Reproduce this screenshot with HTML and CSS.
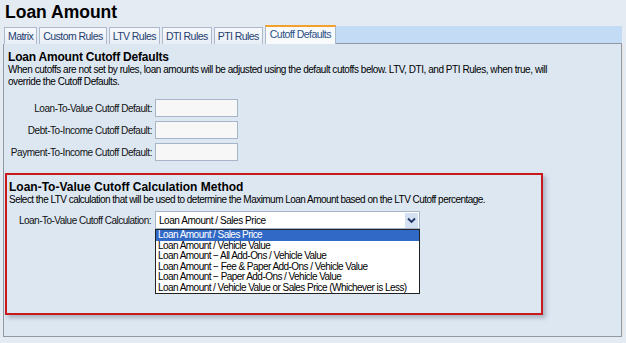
FILE: index.html
```html
<!DOCTYPE html>
<html lang="en">
<head>
  <meta charset="UTF-8">
  <title>Loan Amount</title>
  <link rel="stylesheet" href="styles.css">
</head>
<body>
  <h1 class="title">Loan Amount</h1>

  <div class="tabs">
    <div class="tab">Matrix</div>
    <div class="tab">Custom Rules</div>
    <div class="tab">LTV Rules</div>
    <div class="tab">DTI Rules</div>
    <div class="tab">PTI Rules</div>
    <div class="tab active">Cutoff Defaults</div>
    <div class="tab-fill"></div>
  </div>

  <div class="panel">
    <div class="section">
      <h2>Loan Amount Cutoff Defaults</h2>
      <p class="desc">When cutoffs are not set by rules, loan amounts will be adjusted using the default cutoffs below. LTV, DTI, and PTI Rules, when true, will override the Cutoff Defaults.</p>

      <div class="form">
        <label>Loan-To-Value Cutoff Default:</label>
        <div class="input"></div>
        <label>Debt-To-Income Cutoff Default:</label>
        <div class="input"></div>
        <label>Payment-To-Income Cutoff Default:</label>
        <div class="input"></div>
      </div>
    </div>

    <!-- highlighted calculation method block -->
    <div class="section method">
      <h2>Loan-To-Value Cutoff Calculation Method</h2>
      <p class="desc">Select the LTV calculation that will be used to determine the Maximum Loan Amount based on the LTV Cutoff percentage.</p>

      <div class="select-row">
        <label>Loan-To-Value Cutoff Calculation:</label>
        <div class="select">
          <span>Loan Amount / Sales Price</span>
          <span class="select-btn">
            <svg width="9" height="7" viewBox="0 0 9 7"><polyline points="1,1.5 4.5,5 8,1.5" fill="none" stroke="#1d3566" stroke-width="1.8"/></svg>
          </span>
          <ul class="options">
            <li class="selected">Loan Amount / Sales Price</li>
            <li>Loan Amount / Vehicle Value</li>
            <li>Loan Amount &minus; All Add-Ons / Vehicle Value</li>
            <li>Loan Amount &minus; Fee &amp; Paper Add-Ons / Vehicle Value</li>
            <li>Loan Amount &minus; Paper Add-Ons / Vehicle Value</li>
            <li>Loan Amount / Vehicle Value or Sales Price (Whichever is Less)</li>
          </ul>
        </div>
      </div>
    </div>
  </div>
</body>
</html>
```

FILE: styles.css
```css
body {
  margin: 0;
  background: #e5ebf2;
  font-family: 'Liberation Sans', Arial, sans-serif;
  color: #000;
}
.title {
  margin: 0;
  padding: 1px 0 0 5px;
  font-size: 17.5px;
  line-height: 22px;
  font-weight: bold;
}
.tabs {
  display: flex;
  align-items: flex-end;
  margin: 2px 4px 0 4px;
  height: 19px;
}
.tab {
  height: 17px;
  box-sizing: border-box;
  padding: 0 3px;
  margin-right: 2px;
  border: 1px solid #aab9cb;
  border-bottom: none;
  background: linear-gradient(#f7f9fc, #e8eef5);
  color: #25406f;
  font-size: 10.5px;
  letter-spacing: -0.55px;
  line-height: 17px;
}
.tab.active {
  height: 19px;
  margin-right: 0;
  background: #f8fafc;
  border-top: 2px solid #f3a02c;
  border-color: #f3a02c #aab9cb #aab9cb;
  color: #2b4f86;
  line-height: 15px;
  padding: 0 4px;
}
.tab-fill {
  flex: 1;
  height: 18px;
  box-sizing: border-box;
  background: #c4dbf5;
  border-bottom: 1px solid #8f9aa6;
}
.panel {
  margin: 0 4px 0 3px;
  height: 293px;
  box-sizing: border-box;
  border: 1px solid #8f9aa6;
  border-top: none;
  background: #dce7f2;
  padding: 6px 0 0 1px;
  box-shadow: 1px 1px 0 #e9e4d2;
}
.section {
  padding-left: 3px;
}
h2 {
  margin: 0;
  font-size: 12px;
  line-height: 14px;
  letter-spacing: -0.2px;
}
.desc {
  margin: 0;
  font-size: 10px;
  line-height: 12px;
  letter-spacing: -0.45px;
  width: 545px;
}
.form {
  display: grid;
  grid-template-columns: 144px 83px;
  column-gap: 3px;
  row-gap: 4px;
  margin-top: 11px;
  align-items: center;
}
label {
  font-size: 10px;
  letter-spacing: -0.45px;
  text-align: right;
  color: #111;
}
.input {
  height: 18px;
  box-sizing: border-box;
  border: 1px solid #a6b5c8;
  background: #f7f7f7;
}
.method {
  margin-top: 12px;
  width: 538px;
  height: 142px;
  box-sizing: border-box;
  border: 2px solid #c8191c;
  padding: 5px 0 0 2px;
  box-shadow: 3px 3px 4px rgba(80, 90, 110, 0.35);
}
.method h2 {
  letter-spacing: 0;
}
.method .desc {
  letter-spacing: -0.53px;
}
.select-row {
  display: flex;
  align-items: center;
  margin-top: 5px;
}
.select-row label {
  width: 142px;
  letter-spacing: -0.5px;
}
.select {
  position: relative;
  margin-left: 4px;
  width: 265px;
  height: 18px;
  box-sizing: border-box;
  border: 1px solid #a6b5c8;
  background: #fff;
  display: flex;
  align-items: center;
  justify-content: space-between;
  font-size: 10px;
  letter-spacing: -0.45px;
  padding-left: 3px;
}
.select-btn {
  width: 13px;
  height: 15px;
  margin-right: 1px;
  background: #d3e1f3;
  display: flex;
  align-items: center;
  justify-content: center;
}
.options {
  position: absolute;
  left: -1px;
  top: 17px;
  width: 265px;
  box-sizing: border-box;
  margin: 0;
  padding: 0;
  list-style: none;
  border: 1px solid #222;
  background: #fff;
  letter-spacing: -0.55px;
}
.options li {
  height: 10.5px;
  line-height: 10.5px;
  padding-left: 2px;
  white-space: nowrap;
}
.options li.selected {
  background: #3169c6;
  color: #fff;
}
```
